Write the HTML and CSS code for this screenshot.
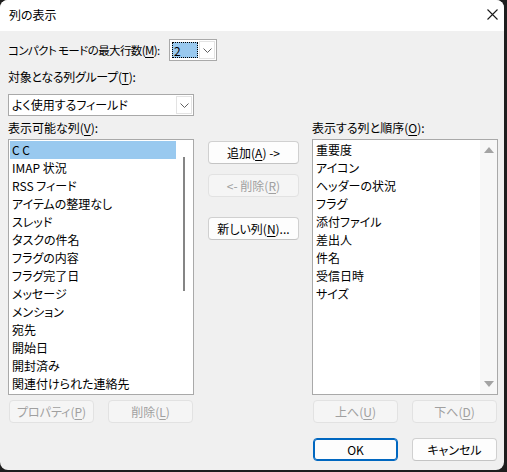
FILE: index.html
```html
<!DOCTYPE html>
<html lang="ja">
<head>
<meta charset="utf-8">
<title>列の表示</title>
<link rel="stylesheet" href="styles.css">
</head>
<body>
<div class="window">
  <div class="titlebar">
    <span class="title">列の表示</span>
    <svg class="close" width="11" height="11" viewBox="0 0 11 11"><path d="M0.5 0.5 L10.5 10.5 M10.5 0.5 L0.5 10.5" stroke="#1a1a1a" stroke-width="1.1" fill="none"/></svg>
  </div>
  <div class="content">
    <div class="row-compact">
      <span class="lbl-compact">コンパクト モードの最大行数(<u>M</u>):</span>
      <div class="combo combo-small">
        <span class="combo-value">2</span>
        <span class="combo-btn"><svg width="9" height="5" viewBox="0 0 9 5"><path d="M0.5 0.5 L4.5 4.5 L8.5 0.5" stroke="#606060" fill="none" stroke-width="1"/></svg></span>
      </div>
    </div>
    <div class="lbl lbl-group">対象となる列グループ(<u>T</u>):</div>
    <div class="combo combo-wide">
      <span class="combo-text">よく使用するフィールド</span>
      <span class="combo-btn"><svg width="9" height="5" viewBox="0 0 9 5"><path d="M0.5 0.5 L4.5 4.5 L8.5 0.5" stroke="#606060" fill="none" stroke-width="1"/></svg></span>
    </div>
    <div class="columns">
      <div class="col col-left">
        <div class="lbl">表示可能な列(<u>V</u>):</div>
        <div class="listbox">
          <div class="items">
            <div class="item selected">C C</div>
            <div class="item">IMAP 状況</div>
            <div class="item">RSS フィード</div>
            <div class="item">アイテムの整理なし</div>
            <div class="item">スレッド</div>
            <div class="item">タスクの件名</div>
            <div class="item">フラグの内容</div>
            <div class="item">フラグ完了日</div>
            <div class="item">メッセージ</div>
            <div class="item">メンション</div>
            <div class="item">宛先</div>
            <div class="item">開始日</div>
            <div class="item">開封済み</div>
            <div class="item">関連付けられた連絡先</div>
          </div>
          <div class="vscroll thin"><div class="thumb"></div></div>
        </div>
        <div class="btn-row">
          <button class="btn" disabled>プロパティ(<u>P</u>)</button>
          <button class="btn" disabled>削除(<u>L</u>)</button>
        </div>
      </div>
      <div class="col-mid">
        <button class="btn btn-add">追加(<u>A</u>) -&gt;</button>
        <button class="btn btn-remove" disabled>&lt;- 削除(<u>R</u>)</button>
        <button class="btn btn-new">新しい列(<u>N</u>)...</button>
      </div>
      <div class="col col-right">
        <div class="lbl">表示する列と順序(<u>O</u>):</div>
        <div class="listbox">
          <div class="items">
            <div class="item">重要度</div>
            <div class="item">アイコン</div>
            <div class="item">ヘッダーの状況</div>
            <div class="item">フラグ</div>
            <div class="item">添付ファイル</div>
            <div class="item">差出人</div>
            <div class="item">件名</div>
            <div class="item">受信日時</div>
            <div class="item">サイズ</div>
          </div>
          <div class="vscroll arrows">
            <span class="arrow-up"></span>
            <span class="arrow-down"></span>
          </div>
        </div>
        <div class="btn-row">
          <button class="btn" disabled>上へ(<u>U</u>)</button>
          <button class="btn" disabled>下へ(<u>D</u>)</button>
        </div>
        <div class="btn-row ok-row">
          <button class="btn btn-default">OK</button>
          <button class="btn">キャンセル</button>
        </div>
      </div>
    </div>
  </div>
</div>
</body>
</html>
```
FILE: styles.css
```css
* { box-sizing: border-box; }
html, body { margin: 0; padding: 0; }
body {
  background: #1e1e1e;
  width: 507px;
  height: 472px;
  overflow: hidden;
  font-family: "Noto Sans CJK JP", "Noto Sans", sans-serif;
  font-size: 12px;
  font-feature-settings: "palt";
  color: #000;
}
u { text-decoration: underline; text-underline-offset: 2px; text-decoration-thickness: 1px; }

.window {
  width: 504px;
  height: 470px;
  background: #f0f0f0;
  border-radius: 8px;
  overflow: hidden;
  display: flex;
  flex-direction: column;
}
.titlebar {
  height: 31px;
  background: #fff;
  display: flex;
  align-items: center;
  justify-content: space-between;
  padding: 0 6px 1px 9px;
  flex: none;
}
.title { line-height: 16px; }
.close { display: block; margin-top: -1px; }

.content { padding: 0 0 0 8px; }

.row-compact {
  margin-top: 8px;
  height: 22px;
  display: flex;
  align-items: center;
}
.lbl-compact {
  width: 161px;
  flex: none;
  white-space: nowrap;
  line-height: 16px;
  font-size: 11.5px;
  letter-spacing: -0.6px;
  overflow: hidden;
}

.combo {
  background: #fff;
  border: 1px solid #a9a9a9;
  height: 22px;
  display: flex;
  align-items: stretch;
  padding: 1px;
  flex: none;
}
.combo-small { width: 48px; }
.combo-value {
  flex: 1;
  background: #99c9ef;
  outline: 1px dotted #000;
  outline-offset: -1px;
  line-height: 18px;
  padding-left: 2px;
  margin: 1px;
}
.combo-btn {
  width: 16px;
  border: 1px solid #e3e3e3;
  background: #fff;
  display: flex;
  align-items: center;
  justify-content: center;
}
.combo-wide { width: 186px; margin-top: 9px; }
.combo-text { flex: 1; line-height: 18px; padding-left: 2px; white-space: nowrap; }

.lbl { line-height: 16px; white-space: nowrap; }
.lbl-group { margin-top: 8px; letter-spacing: -0.3px; }

.columns {
  display: flex;
  margin-top: 4px;
}
.col { width: 186px; display: flex; flex-direction: column; }
.col-mid {
  width: 91px;
  margin-left: 14px;
  padding-top: 21px;
  display: flex;
  flex-direction: column;
}
.col-right { margin-left: 13px; }

.listbox {
  margin-top: 3px;
  height: 256px;
  background: #fff;
  border: 1px solid #a9a9a9;
  display: flex;
}
.items { flex: 1; padding: 1px 0 0 1px; }
.item {
  height: 18px;
  line-height: 18px;
  padding-left: 2px;
  white-space: nowrap;
}
.item.selected { background: #99c9ef; }
.vscroll { width: 17px; flex: none; }
.vscroll.thin { padding: 17px 0 0 7px; }
.thumb { width: 2px; height: 134px; background: #858585; }
.vscroll.arrows {
  background: #f7f7f7;
  display: flex;
  flex-direction: column;
  justify-content: space-between;
  align-items: center;
  padding: 7px 0 7px 0;
}
.arrow-up, .arrow-down {
  width: 0; height: 0;
  border-left: 5px solid transparent;
  border-right: 5px solid transparent;
}
.arrow-up { border-bottom: 6px solid #a3a3a3; }
.arrow-down { border-top: 6px solid #a3a3a3; }

.btn {
  font-family: inherit;
  font-size: 12px;
  font-feature-settings: "palt";
  height: 23px;
  line-height: 16px;
  padding: 0;
  background: #fdfdfd;
  border: 1px solid #d0d0d0;
  border-bottom-color: #c4c4c4;
  border-radius: 4px;
  color: #000;
}
.btn:disabled {
  background: #f5f5f5;
  border-color: #e2e2e2;
  color: #a0a0a0;
}
.btn-row {
  display: flex;
  justify-content: space-between;
  margin-top: 5px;
  padding: 0 1px;
}
.btn-row .btn { width: 85px; }
.ok-row { margin-top: 15px; }
.btn-default {
  border: 1px solid #0067c0;
  box-shadow: inset 0 0 0 1px #0067c0;
}
.btn-remove { margin-top: 10px; }
.btn-new { margin-top: 20px; }
```
